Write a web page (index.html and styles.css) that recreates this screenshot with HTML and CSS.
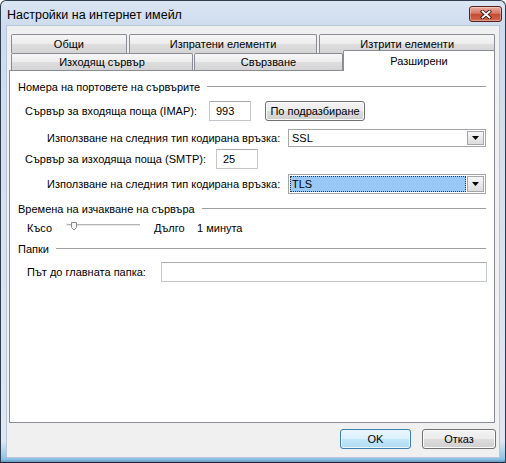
FILE: index.html
```html
<!DOCTYPE html>
<html lang="bg">
<head>
<meta charset="utf-8">
<title>Настройки на интернет имейл</title>
<link rel="stylesheet" href="styles.css">
</head>
<body>
<div class="window">
  <div class="titlebar">
    <span class="title">Настройки на интернет имейл</span>
    <div class="close">
      <svg width="12" height="9" viewBox="0 0 12 9">
        <path d="M2.5 1.5 L9.5 7.5 M9.5 1.5 L2.5 7.5" stroke="#3b1712" stroke-width="3.6" stroke-linecap="square" fill="none"/>
        <path d="M2.5 1.5 L9.5 7.5 M9.5 1.5 L2.5 7.5" stroke="#ffffff" stroke-width="1.8" stroke-linecap="square" fill="none"/>
      </svg>
    </div>
  </div>
  <div class="client">
    <div class="tabctl">
      <div class="tabrow r1">
        <div class="tab t-general">Общи</div>
        <div class="tab t-sent">Изпратени елементи</div>
        <div class="tab t-deleted">Изтрити елементи</div>
      </div>
      <div class="tabrow r2">
        <div class="tab t-out">Изходящ сървър</div>
        <div class="tab t-conn">Свързване</div>
        <div class="tab t-adv sel">Разширени</div>
      </div>
      <div class="panel">
        <div class="row h-18 grp">Номера на портовете на сървърите</div>
        <div class="row h-30">
          <span class="lbl lbl-imap">Сървър за входяща поща (IMAP):</span>
          <span class="field port">993</span>
          <button class="btn btn-default-port">По подразбиране</button>
        </div>
        <div class="row h-23">
          <span class="lbl lbl-enc">Използване на следния тип кодирана връзка:</span>
          <div class="combo">
            <span class="val">SSL</span>
            <span class="arrow"><svg width="7" height="4" viewBox="0 0 7 4"><path d="M0 0 H7 L3.5 4 Z" fill="#000"/></svg></span>
          </div>
        </div>
        <div class="row h-20">
          <span class="lbl lbl-smtp">Сървър за изходяща поща (SMTP):</span>
          <span class="field port">25</span>
        </div>
        <div class="row h-30">
          <span class="lbl lbl-enc">Използване на следния тип кодирана връзка:</span>
          <div class="combo combo-tall">
            <span class="val hl">TLS</span>
            <span class="arrow"><svg width="7" height="4" viewBox="0 0 7 4"><path d="M0 0 H7 L3.5 4 Z" fill="#000"/></svg></span>
          </div>
        </div>
        <div class="row h-20 grp">Времена на изчакване на сървъра</div>
        <div class="row h-18">
          <span class="lbl lbl-short">Късо</span>
          <svg class="slider" width="76" height="12" viewBox="0 0 76 12">
            <path d="M1 2.5 V4.5" stroke="#b8b8b8" stroke-width="1"/>
            <rect x="1" y="3" width="73" height="1" fill="#b4b4b4"/>
            <rect x="1" y="4" width="73" height="1" fill="#e6e6e6"/>
            <path d="M5.5 1.5 H10.5 V6.5 L8 9 L5.5 6.5 Z" fill="#f6f6f6" stroke="#8a8a8a" stroke-width="1"/>
          </svg>
          <span class="lbl lbl-long">Дълго</span>
          <span class="lbl">1 минута</span>
        </div>
        <div class="row h-24 grp">Папки</div>
        <div class="row h-22">
          <span class="lbl lbl-path">Път до главната папка:</span>
          <span class="field path"></span>
        </div>
      </div>
    </div>
    <div class="footer">
      <button class="btn btn-ok">OK</button>
      <button class="btn btn-cancel">Отказ</button>
    </div>
  </div>
</div>
</body>
</html>
```
FILE: styles.css
```css
html, body {
  margin: 0;
  padding: 0;
  background: #ffffff;
}

.window {
  width: 506px;
  height: 463px;
  box-sizing: border-box;
  border: 1px solid #2f3d50;
  border-bottom-color: #1c2634;
  border-radius: 6px 6px 0 0;
  background: linear-gradient(#dbe6f3 0px, #cddbee 26px, #d6e1ee 200px, #dfe7f0 440px, #8cc3e6 458px, #5d8fb5 462px);
  display: flex;
  flex-direction: column;
  font-family: "Liberation Sans", Arial, sans-serif;
  font-size: 11px;
  color: #000;
  overflow: hidden;
}

.titlebar {
  height: 25px;
  flex: none;
  display: flex;
  align-items: flex-start;
}

.title {
  margin: 6px 0 0 6px;
  font-size: 12.5px;
  line-height: 16px;
  color: #000;
}

.close {
  width: 33px;
  height: 16px;
  box-sizing: border-box;
  margin: 5px 3px 0 auto;
  border: 1px solid #5a2019;
  border-radius: 3px;
  background: linear-gradient(#e9ad9f 0%, #d77865 45%, #c44b33 52%, #cf6a4c 100%);
  box-shadow: inset 0 0 0 1px rgba(255, 255, 255, 0.35);
  display: flex;
  align-items: center;
  justify-content: center;
}

.client {
  flex: 1;
  margin: 0 6px 5px 6px;
  background: #f0f0f0;
  box-shadow: 0 0 0 1px #b7c6d9;
  display: flex;
  flex-direction: column;
}

.tabctl {
  margin: 8px 0 0 2px;
  width: 486px;
  display: flex;
  flex-direction: column;
}

.tabrow {
  display: flex;
  padding-left: 2px;
}

.tabrow.r1 {
  height: 19px;
  gap: 2px;
}

.tabrow.r2 {
  height: 17px;
}

.tab {
  box-sizing: border-box;
  height: 100%;
  border: 1px solid #898c95;
  border-bottom: none;
  border-radius: 2px 2px 0 0;
  background: linear-gradient(#f6f6f6 0%, #ececec 50%, #dedede 51%, #d4d4d4 100%);
  display: flex;
  align-items: center;
  justify-content: center;
  white-space: nowrap;
}

.t-general { width: 116px; }
.t-sent { width: 189px; }
.t-deleted { width: 176px; }
.t-out { width: 182px; margin-right: 1px; }
.t-conn { width: 149px; }

.tab.sel {
  width: 152px;
  height: 21px;
  margin-top: -3px;
  align-self: flex-start;
  background: #ffffff;
  position: relative;
  z-index: 1;
  padding-bottom: 1px;
}

.panel {
  box-sizing: border-box;
  height: 353px;
  border: 1px solid #898c95;
  background: #ffffff;
  padding: 7px 8px 0 8px;
  display: flex;
  flex-direction: column;
}

.row {
  display: flex;
  align-items: center;
  flex: none;
  white-space: nowrap;
}

.h-18 { height: 18px; }
.h-20 { height: 20px; }
.h-22 { height: 22px; }
.h-23 { height: 23px; }
.h-24 { height: 24px; }
.h-30 { height: 30px; }

.grp::after {
  content: "";
  flex: 1;
  border-top: 1px solid #a0a0a0;
  margin-left: 7px;
  margin-top: -1px;
}

.lbl {
  box-sizing: border-box;
  flex: none;
}

.lbl-imap { width: 191px; padding-left: 7px; }
.lbl-smtp { width: 198px; padding-left: 7px; }
.lbl-enc { padding-left: 29px; }
.lbl-short { width: 48px; padding-left: 9px; }
.lbl-long { width: 55px; padding-left: 12px; }
.lbl-path { width: 143px; padding-left: 9px; }

.slider {
  display: block;
  flex: none;
  margin-top: -2px;
}

.field {
  box-sizing: border-box;
  height: 20px;
  border: 1px solid #c4c7cc;
  border-top-color: #abadb3;
  background: #ffffff;
  padding-left: 6px;
  display: flex;
  align-items: center;
}

.field.port { width: 42px; }
.field.path { flex: 1; margin-right: -1px; }

.btn {
  box-sizing: border-box;
  height: 20px;
  padding: 0;
  border: 1px solid #707070;
  border-radius: 3px;
  background: linear-gradient(#f3f3f3 0%, #ebebeb 50%, #dddddd 51%, #cfcfcf 100%);
  box-shadow: inset 0 0 0 1px #fbfbfb;
  font: inherit;
  color: #000;
}

.btn-default-port {
  width: 100px;
  margin-left: 14px;
}

.combo {
  box-sizing: border-box;
  width: 198px;
  height: 18px;
  margin-left: auto;
  border: 1px solid #a3a6ab;
  background: #ffffff;
  display: flex;
  padding: 1px;
}

.combo-tall { height: 20px; }

.combo .val {
  flex: 1;
  display: flex;
  align-items: center;
  padding-left: 2px;
}

.combo .val.hl {
  background: #99c8f6;
  outline: 1px dotted #333;
  outline-offset: -1px;
  margin-right: 1px;
}

.combo .arrow {
  box-sizing: border-box;
  width: 17px;
  border: 1px solid #a6a6a6;
  background: linear-gradient(#f7f7f7, #dcdcdc);
  display: flex;
  align-items: center;
  justify-content: center;
}

.footer {
  display: flex;
  justify-content: flex-end;
  gap: 11px;
  margin-top: 6px;
  padding-right: 3px;
}

.btn-ok {
  width: 71px;
  border-color: #3c7fb1;
  background: linear-gradient(#eaf6fd 0%, #d9f0fc 50%, #c4e6f9 51%, #b2dcf4 100%);
  box-shadow: inset 0 0 0 1px #e9f7fe;
}

.btn-cancel { width: 74px; }
```
